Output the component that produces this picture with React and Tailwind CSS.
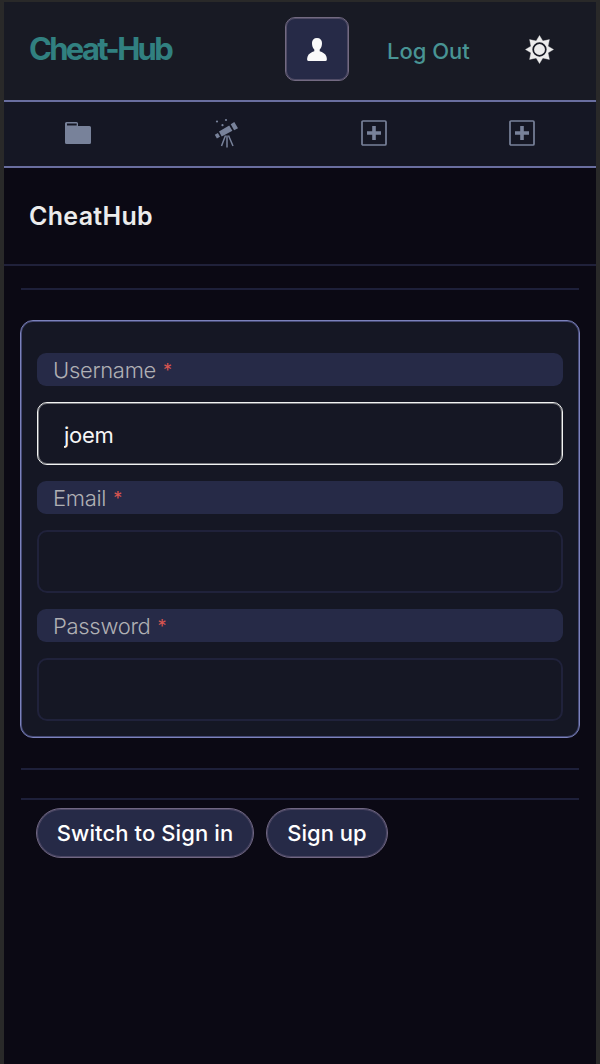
const PersonIcon = () => (
  <svg width="20" height="24" viewBox="0 0 20 24" fill="#fafafa" className="mt-[2px]">
    <path d="M10 0C6.800 0 5 2 5 5C5 8 5.700 10 7.300 11.500V13.200C4.500 14.200 1.500 15.500.6 18.500C.1 20.300 0 21.300 .3 22.300Q.5 23 1.500 23H18.500Q19.500 23 19.700 22.300C20 21.300 19.900 20.300 19.400 18.500C18.500 15.500 15.500 14.200 12.700 13.200V11.500C14.300 10 15 8 15 5C15 2 13.200 0 10 0Z" />
  </svg>
);

const SunIcon = () => (
  <svg width="28" height="28" viewBox="-14.500 -13.500 28 28" fill="#ececec" className="mb-[3px] overflow-visible">
    <path d="M0-14L3.300-8.500L9.900-9.900L8.500-3.300L14 0L8.500 3.300L9.900 9.900L3.300 8.500L0 14L-3.300 8.500L-9.900 9.900L-8.500 3.300L-14 0L-8.500-3.300L-9.900-9.900L-3.300-8.500Z" stroke="#ececec" strokeWidth=".4" strokeLinejoin="round" />
    <circle r="6.300" stroke="#181a24" strokeWidth="1.700" />
  </svg>
);

const FolderIcon = () => (
  <svg width="26" height="22" viewBox="0 0 26 22" fill="#78829a">
    <path fillRule="evenodd" d="M1.500 0H11.500Q13 0 13 1.500V4H24.500Q26 4 26 5.500V20.500Q26 22 24.500 22H1.500Q0 22 0 20.500V1.500Q0 0 1.500 0ZM2 1.500V3.500H11.700V1.500H2Z" />
  </svg>
);

const TelescopeIcon = () => (
  <svg width="24" height="30" viewBox="0 0 24 30" fill="#78829a">
    <path d="M5 13.500L15.200 7.600L18.400 12.700L7.700 18.400ZM16.700 6.200L20.300 4L24 10.200L20.100 12.300ZM.8 16.700L3.900 14.900L6 18.700L2.900 20.400Z" />
    <path d="M11.500 17.500L7.500 28M13 17.500V29.500M14.500 17.500L19 28" stroke="#78829a" strokeWidth="1.500" />
    <circle cx="3" cy="3.500" r="1.100" />
    <circle cx="12" cy="2" r="1.100" />
    <circle cx="8.500" cy="7.200" r="1.100" />
  </svg>
);

const PlusIcon = () => (
  <svg width="26" height="26" viewBox="0 0 26 26" fill="none" stroke="#78829a">
    <rect x="1" y="1" width="24" height="24" rx="1" strokeWidth="1.700" />
    <path d="M13 6V20M6 13H20" strokeWidth="3.600" />
  </svg>
);

const Field = ({ label, value = "", active = false }) => (
  <div className="flex flex-col gap-4">
    <label className="flex h-[33px] items-center rounded-[9px] bg-[#262a47] pl-4 pt-[2px] text-[22px] font-light tracking-[-0.3px] text-[#b0b0b4]">
      <span>{label}</span>
      <span className="ml-[7px] text-[18px] font-normal text-[#d95550]">*</span>
    </label>
    <input
      aria-label={label}
      defaultValue={value}
      className={
        "h-[63px] w-full rounded-[10px] bg-[#151724] px-[26px] pt-[2px] text-[22px] tracking-[-0.3px] text-[#f5f5f5] outline-none " +
        (active ? "border-[1px] border-[#f2f3f2] ring-1 ring-inset ring-[#77787e]" : "border-2 border-[#20223b]")
      }
    />
  </div>
);

const Rule = () => <div className="h-[2px] bg-[#1e203a]" />;

const pill =
  "flex h-[50px] items-center justify-center rounded-full border border-[#716783] bg-[#262a47] text-[22px] font-medium text-white ring-1 ring-inset ring-[#4a4663]";

export default function App() {
  return (
    <div className="h-[1064px] w-[600px] bg-[#292929] px-1 pt-[2px] font-['Inter',sans-serif]">
      <div className="flex h-full flex-col bg-[#0b0914]">
        <header className="flex h-[98px] items-center bg-[#181a24]">
          <div className="mt-[-3px] ml-[25px] w-[256px] text-[31px] font-bold tracking-[-2.7px] text-[#318080]">Cheat-Hub</div>
          <button className="mt-[-4px] flex h-16 w-16 items-center justify-center rounded-[10px] border border-[#736a82] bg-[#262a47] ring-1 ring-inset ring-[#504c66]">
            <PersonIcon />
          </button>
          <span className="ml-[38px] w-[138px] text-[22px] font-medium text-[#489494]">Log Out</span>
          <SunIcon />
        </header>
        <nav className="grid h-[68px] grid-cols-4 place-items-center border-y-2 border-[#696e9f] bg-[#151724] pb-[2px]">
          <FolderIcon />
          <TelescopeIcon />
          <PlusIcon />
          <PlusIcon />
        </nav>
        <div className="flex h-[98px] items-center border-b-2 border-[#20213a] pt-[2px] pl-[25px]">
          <h1 className="text-[25px] font-semibold tracking-[0.3px] text-[#ececec]">CheatHub</h1>
        </div>
        <main className="flex flex-col px-[17px] pt-[22px]">
          <Rule />
          <section className="-mx-px mt-[30px] flex h-[418px] flex-col gap-4 rounded-[13px] border border-[#7c82bc] bg-[#151724] px-4 pt-8 ring-1 ring-inset ring-[#454974]">
            <Field label="Username" value="joem" active />
            <Field label="Email" />
            <Field label="Password" />
          </section>
          <div className="mt-[30px] flex flex-col gap-7">
            <Rule />
            <Rule />
          </div>
          <div className="ml-[15px] mt-2 flex gap-3">
            <button className={pill + " w-[218px] tracking-[0.1px]"}>Switch to Sign in</button>
            <button className={pill + " w-[122px]"}>Sign up</button>
          </div>
        </main>
      </div>
    </div>
  );
}
